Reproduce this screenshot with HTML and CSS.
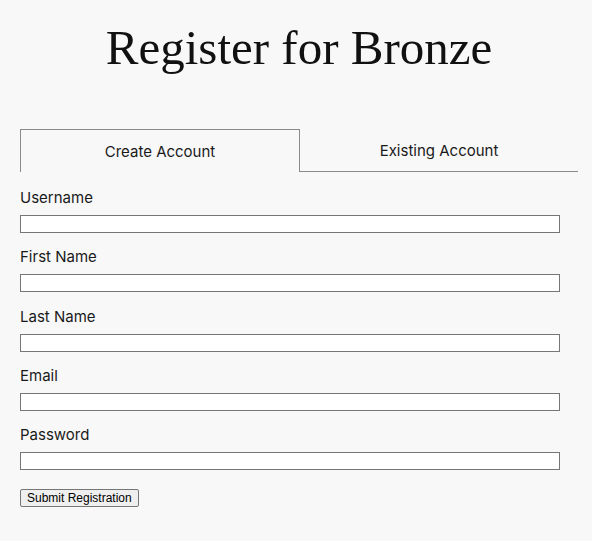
FILE: index.html
```html
<!DOCTYPE html>
<html lang="en">
<head>
<meta charset="utf-8">
<title>Register for Bronze</title>
<link rel="stylesheet" href="styles.css">
</head>
<body>
<main class="page">
  <h1 class="title">Register for Bronze</h1>
  <div class="tabs">
    <div class="tab tab-active">Create Account</div>
    <div class="tab">Existing Account</div>
  </div>
  <form class="form">
    <div class="field">
      <label class="label">Username</label>
      <input class="input" type="text">
    </div>
    <div class="field">
      <label class="label">First Name</label>
      <input class="input" type="text">
    </div>
    <div class="field">
      <label class="label">Last Name</label>
      <input class="input" type="text">
    </div>
    <div class="field">
      <label class="label">Email</label>
      <input class="input" type="text">
    </div>
    <div class="field">
      <label class="label">Password</label>
      <input class="input" type="password">
    </div>
    <button class="submit" type="button">Submit Registration</button>
  </form>
</main>
</body>
</html>
```

FILE: styles.css
```css
html, body {
  margin: 0;
  padding: 0;
  background: #f8f8f8;
}

body {
  font-family: Inter, "Noto Sans", sans-serif;
  color: #1a1a1a;
}

.page {
  width: 558px;
  padding: 0 14px 0 20px;
}

.title {
  margin: 0;
  padding-top: 18px;
  height: 129px;
  box-sizing: border-box;
  text-align: center;
  font-family: "Liberation Serif", serif;
  font-weight: normal;
  font-size: 49px;
  line-height: 60px;
  color: #111;
}

.tabs {
  display: flex;
  height: 43px;
}

.tab {
  flex: 1;
  box-sizing: border-box;
  display: flex;
  align-items: center;
  justify-content: center;
  font-size: 15px;
  border-bottom: 1px solid #8a8a8a;
}

.tab-active {
  border: 1px solid #8a8a8a;
  border-bottom: none;
}

.form {
  padding-top: 16px;
}

.field {
  display: flex;
  flex-direction: column;
  margin-bottom: 14.25px;
}

.label {
  font-size: 15px;
  line-height: 20px;
  margin-bottom: 7px;
}

.input {
  box-sizing: border-box;
  width: 540px;
  height: 18px;
  margin: 0;
  padding: 0 2px;
  border: 1px solid #767676;
  background: #fff;
}

.submit {
  margin-top: 5px;
  box-sizing: border-box;
  height: 18px;
  padding: 0 6px;
  font-family: "Liberation Sans", Arial, sans-serif;
  font-size: 12px;
  color: #000;
  background: #efefef;
  border: 1px solid #767676;
  border-radius: 2px;
}
```
